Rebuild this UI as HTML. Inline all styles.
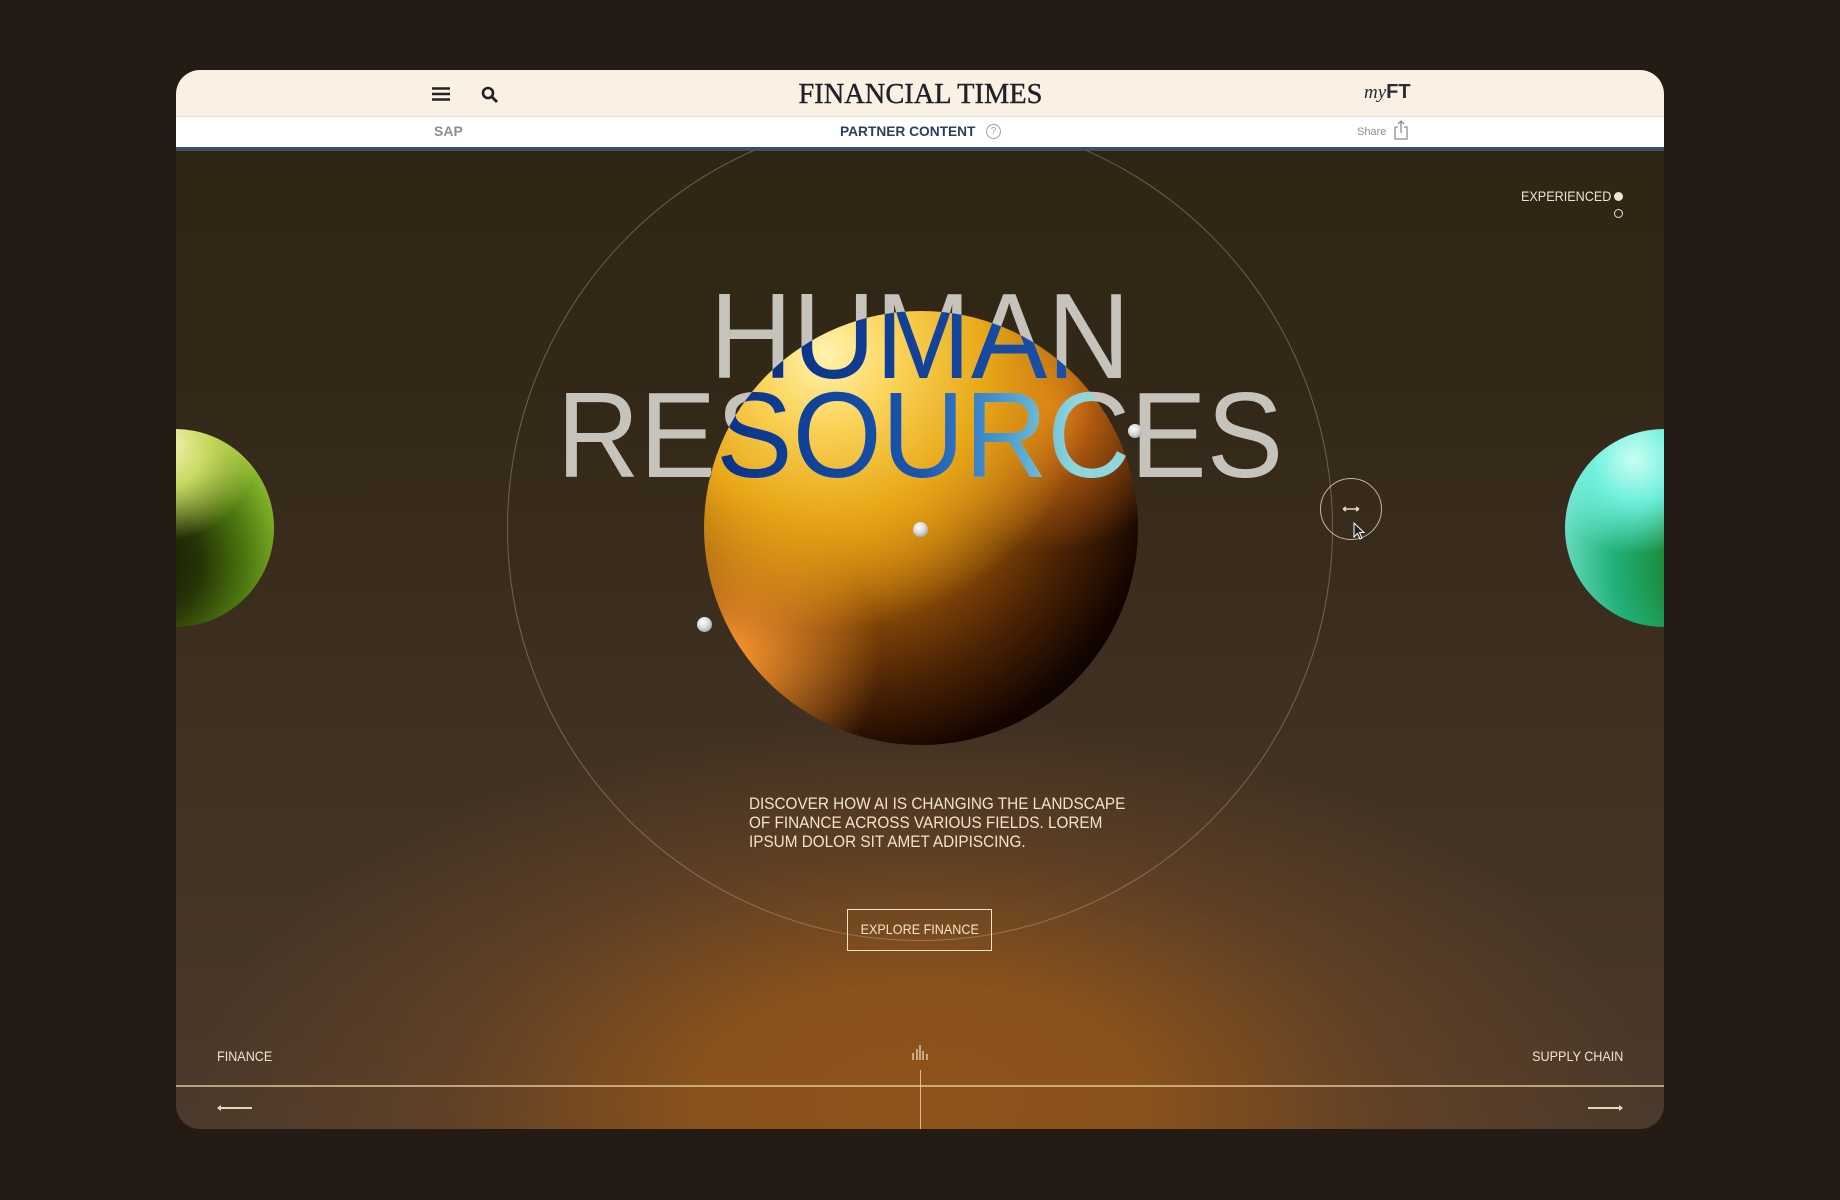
<!DOCTYPE html>
<html><head><meta charset="utf-8">
<style>
*{margin:0;padding:0;box-sizing:border-box}
html,body{width:1840px;height:1200px;overflow:hidden;background:#231b14;font-family:"Liberation Sans",sans-serif}
.card{position:absolute;left:176px;top:70px;width:1488px;height:1059px;border-radius:24px;overflow:hidden;
background:radial-gradient(ellipse 720px 380px at 744px 1030px,#8e531b 0%,#8a521c 30%,rgba(110,70,35,0.6) 65%,rgba(80,60,45,0) 100%),linear-gradient(180deg,#2d2513 0%,#332818 30%,#3f3021 60%,#4c3a2c 100%)}
.hdr{position:absolute;left:0;top:0;width:1488px;height:46px;background:#faf0e4}
.sub{position:absolute;left:0;top:46px;width:1488px;height:31px;background:#fff;border-top:1px solid #e6ddd2}
.subline{position:absolute;left:0;top:77px;width:1488px;height:4px;background:#3d4f64}
.abs{position:absolute}
.ring{position:absolute;left:331px;top:45px;width:826px;height:826px;border-radius:50%;border:1px solid rgba(220,200,170,0.35)}
.sphere{position:absolute;left:528px;top:241px;width:434px;height:434px;border-radius:50%;
background:radial-gradient(circle at 28% 10%,#fff3b0 0%,#fbd45a 14%,#e8a818 32%,rgba(190,110,10,0) 55%),
radial-gradient(circle at 6% 80%,#ff9a30 0%,rgba(240,130,30,0) 28%),
radial-gradient(circle at 80% 22%,#d87016 0%,rgba(200,90,10,0) 30%),
radial-gradient(circle at 32% 32%,#d89010 0%,#a85d08 30%,#4a2204 58%,#120400 76%,#000 100%)}
.green{position:absolute;left:-100px;top:359px;width:198px;height:198px;border-radius:50%;
background:radial-gradient(circle at 45% 8%,#f4f4b8 0%,#c8d860 20%,rgba(140,170,30,0) 45%),radial-gradient(circle at 35% 68%,#141404 0%,#263406 30%,#4e7a10 55%,#90c030 80%,#b8e060 95%)}
.teal{position:absolute;left:1389px;top:359px;width:198px;height:198px;border-radius:50%;
background:radial-gradient(circle at 35% 15%,#c8fff4 0%,#70f0dc 20%,rgba(40,200,170,0) 45%),radial-gradient(circle at 85% 70%,#0f6a20 0%,#1a8a38 30%,#22b07a 55%,#7ae8d4 85%,#c0fff4 100%)}
.ball{position:absolute;width:15px;height:15px;border-radius:50%;background:radial-gradient(circle at 40% 35%,#fff 0%,#ddd 40%,#888 100%)}
.t{position:absolute;font-size:122px;line-height:1;white-space:nowrap;color:#c6c3bc;transform:scaleX(0.94);transform-origin:center top;left:0;width:1488px;text-align:center}
.clip{position:absolute;left:0;top:0;width:1488px;height:1059px;clip-path:circle(217px at 745px 458px)}
.b{background:linear-gradient(90deg,#0a3388 0%,#0a3388 36%,#1a55ae 50%,#4a9ad0 56%,#8cd6dc 61%,#8cd6dc 100%);-webkit-background-clip:text;background-clip:text;color:transparent}
.sm{font-size:14px;color:#f2e4cc}
</style></head><body>
<div class="card">
  <div class="ring"></div>
  <div class="green"></div>
  <div class="teal"></div>
  <div class="sphere"></div>
  <div class="t" style="top:205px">HUMAN</div>
  <div class="t" style="top:304px">RESOURCES</div>
  <div class="clip">
    <div class="t b" style="top:205px;background:linear-gradient(90deg,#0a3388 40%,#1a50a8 60%);-webkit-background-clip:text;background-clip:text">HUMAN</div>
    <div class="t b" style="top:304px">RESOURCES</div>
  </div>
  <div class="ball" style="left:737px;top:452px"></div>
  <div class="ball" style="left:521px;top:547px"></div>
  <div class="ball" style="left:952px;top:354px;width:14px;height:14px"></div>

  <div class="abs" style="left:1144px;top:408px;width:62px;height:62px;border-radius:50%;border:1.5px solid rgba(230,215,190,0.8)"></div>
  <svg class="abs" style="left:1164px;top:432px" width="22" height="14" viewBox="0 0 22 14"><path d="M3 7H19M3 7L6 5M3 7L6 9M19 7L16 5M19 7L16 9" stroke="#e8d8bc" stroke-width="1.5" fill="none"/></svg>
  <svg class="abs" style="left:1177px;top:452px" width="14" height="20" viewBox="0 0 14 20"><path d="M1 1L1 15L4.5 11.5L7 17L9 16L6.5 10.5L11 10.5Z" fill="#222" stroke="#fff" stroke-width="1"/></svg>

  <div class="abs sm" style="left:1345px;top:118px;font-size:14px;transform:scaleX(0.9);transform-origin:left">EXPERIENCED</div>
  <div class="abs" style="left:1438px;top:122px;width:9px;height:9px;border-radius:50%;background:#f2e4cc"></div>
  <div class="abs" style="left:1438px;top:139px;width:9px;height:9px;border-radius:50%;border:1.5px solid #f2e4cc"></div>

  <div class="abs" style="left:573px;top:724px;width:460px;font-size:17px;line-height:19px;color:#f2e4cc;transform:scaleX(0.9);transform-origin:left top">DISCOVER HOW AI IS CHANGING THE LANDSCAPE<br>OF FINANCE ACROSS VARIOUS FIELDS. LOREM<br>IPSUM DOLOR SIT AMET ADIPISCING.</div>

  <div class="abs" style="left:671px;top:839px;width:145px;height:42px;border:1.5px solid #f2e4cc;color:#f2e4cc;font-size:14px;line-height:39px;text-align:center"><span style="display:inline-block;transform:scaleX(0.9)">EXPLORE FINANCE</span></div>

  <div class="abs sm" style="left:41px;top:978px;transform:scaleX(0.9);transform-origin:left">FINANCE</div>
  <div class="abs sm" style="right:41px;top:978px;transform:scaleX(0.9);transform-origin:right">SUPPLY CHAIN</div>
  <svg class="abs" style="left:734px;top:975px" width="20" height="16" viewBox="0 0 20 16"><path d="M3 15V8M7 15V4M10 15V0M13 15V6M17 15V9" stroke="#f2e4cc" stroke-width="1.2"/></svg>
  <div class="abs" style="left:0;top:1015px;width:1488px;height:2px;background:rgba(235,205,160,0.7)"></div>
  <div class="abs" style="left:744px;top:1000px;width:1px;height:60px;background:rgba(240,215,180,0.8)"></div>
  <svg class="abs" style="left:40px;top:1032px" width="38" height="12" viewBox="0 0 38 12"><path d="M2 6H36" stroke="#e8d4b8" stroke-width="2"/><path d="M1 6L5 3V9Z" fill="#e8d4b8"/></svg>
  <svg class="abs" style="left:1410px;top:1032px" width="38" height="12" viewBox="0 0 38 12"><path d="M2 6H36" stroke="#e8d4b8" stroke-width="2"/><path d="M37 6L33 3V9Z" fill="#e8d4b8"/></svg>

  <div class="hdr"></div>
  <div class="sub"></div>
  <div class="subline"></div>
  <svg class="abs" style="left:256px;top:17px" width="18" height="14" viewBox="0 0 18 14"><path d="M0 1.5H18M0 7H18M0 12.5H18" stroke="#222" stroke-width="2.6"/></svg>
  <svg class="abs" style="left:305px;top:16px" width="18" height="18" viewBox="0 0 18 18"><circle cx="7" cy="7" r="5" stroke="#222" stroke-width="2.6" fill="none"/><path d="M10.5 10.5L16 16" stroke="#222" stroke-width="2.8"/></svg>
  <div class="abs" style="left:0;width:1488px;top:8px;text-align:center;font-family:'Liberation Serif',serif;font-size:29px;color:#1e2129"><span style="display:inline-block;transform:scaleX(0.98);-webkit-text-stroke:0.4px #1e2129">FINANCIAL TIMES</span></div>
  <div class="abs" style="left:1188px;top:11px;font-size:20px;color:#262a33"><span style="font-family:'Liberation Serif',serif;font-style:italic;font-size:19px">my</span><b>FT</b></div>
  <div class="abs" style="left:258px;top:53px;font-size:14px;font-weight:bold;color:#8a8e96">SAP</div>
  <div class="abs" style="left:664px;top:53px;font-size:14px;font-weight:bold;color:#2d3f5e;transform:scaleX(0.98);transform-origin:left">PARTNER CONTENT</div>
  <div class="abs" style="left:810px;top:54px;width:15px;height:15px;border-radius:50%;border:1.3px solid #9aa0a8;font-size:10px;line-height:13px;text-align:center;color:#9aa0a8">?</div>
  <div class="abs" style="left:1181px;top:56px;font-size:11px;color:#8a8e96">Share</div>
  <svg class="abs" style="left:1218px;top:50px" width="14" height="20" viewBox="0 0 14 20"><path d="M4 7H1V19H13V7H10M7 13V1M4 4L7 1L10 4" stroke="#8a8e96" stroke-width="1.3" fill="none"/></svg>
</div>
</body></html>
